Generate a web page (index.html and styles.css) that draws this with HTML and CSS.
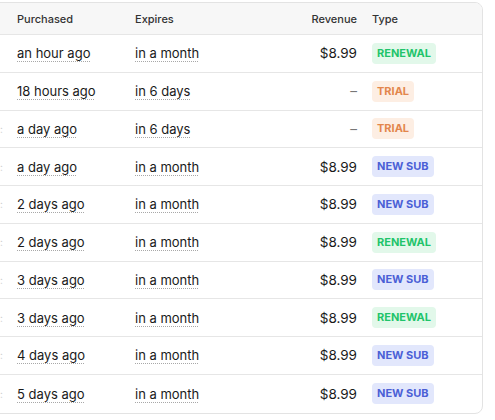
FILE: index.html
```html
<!DOCTYPE html>
<html>
<head>
<meta charset="utf-8">
<link rel="stylesheet" href="styles.css">
</head>
<body>
<div class="viewport">
  <div class="card">
    <div class="row head">
      <div class="cell"></div>
      <div class="cell">Purchased</div>
      <div class="cell">Expires</div>
      <div class="cell num">Revenue</div>
      <div class="cell type">Type</div>
    </div>
    <div class="row">
      <div class="cell"></div>
      <div class="cell"><span class="dt">an hour ago</span></div>
      <div class="cell"><span class="dt">in a month</span></div>
      <div class="cell num">$8.99</div>
      <div class="cell type"><span class="badge renewal">RENEWAL</span></div>
    </div>
    <div class="row">
      <div class="cell"></div>
      <div class="cell"><span class="dt">18 hours ago</span></div>
      <div class="cell"><span class="dt">in 6 days</span></div>
      <div class="cell num dash">–</div>
      <div class="cell type"><span class="badge trial">TRIAL</span></div>
    </div>
    <div class="row">
      <div class="cell cut">:</div>
      <div class="cell"><span class="dt">a day ago</span></div>
      <div class="cell"><span class="dt">in 6 days</span></div>
      <div class="cell num dash">–</div>
      <div class="cell type"><span class="badge trial">TRIAL</span></div>
    </div>
    <div class="row">
      <div class="cell cut">:</div>
      <div class="cell"><span class="dt">a day ago</span></div>
      <div class="cell"><span class="dt">in a month</span></div>
      <div class="cell num">$8.99</div>
      <div class="cell type"><span class="badge newsub">NEW SUB</span></div>
    </div>
    <div class="row">
      <div class="cell cut">:</div>
      <div class="cell"><span class="dt">2 days ago</span></div>
      <div class="cell"><span class="dt">in a month</span></div>
      <div class="cell num">$8.99</div>
      <div class="cell type"><span class="badge newsub">NEW SUB</span></div>
    </div>
    <div class="row">
      <div class="cell cut">:</div>
      <div class="cell"><span class="dt">2 days ago</span></div>
      <div class="cell"><span class="dt">in a month</span></div>
      <div class="cell num">$8.99</div>
      <div class="cell type"><span class="badge renewal">RENEWAL</span></div>
    </div>
    <div class="row">
      <div class="cell cut">:</div>
      <div class="cell"><span class="dt">3 days ago</span></div>
      <div class="cell"><span class="dt">in a month</span></div>
      <div class="cell num">$8.99</div>
      <div class="cell type"><span class="badge newsub">NEW SUB</span></div>
    </div>
    <div class="row">
      <div class="cell cut">:</div>
      <div class="cell"><span class="dt">3 days ago</span></div>
      <div class="cell"><span class="dt">in a month</span></div>
      <div class="cell num">$8.99</div>
      <div class="cell type"><span class="badge renewal">RENEWAL</span></div>
    </div>
    <div class="row">
      <div class="cell cut">:</div>
      <div class="cell"><span class="dt">4 days ago</span></div>
      <div class="cell"><span class="dt">in a month</span></div>
      <div class="cell num">$8.99</div>
      <div class="cell type"><span class="badge newsub">NEW SUB</span></div>
    </div>
    <div class="row">
      <div class="cell cut">:</div>
      <div class="cell"><span class="dt">5 days ago</span></div>
      <div class="cell"><span class="dt">in a month</span></div>
      <div class="cell num">$8.99</div>
      <div class="cell type"><span class="badge newsub">NEW SUB</span></div>
    </div>
  </div>
</div>
</body>
</html>
```
FILE: styles.css
```css
html, body {
  margin: 0;
  padding: 0;
  background: #ffffff;
}
body {
  font-family: Inter, "Noto Sans", sans-serif;
  color: #1a1a1a;
}
.viewport {
  width: 495px;
  height: 420px;
  overflow: hidden;
}
.card {
  margin: 2px 0 0 -30px;
  width: 513px;
  box-sizing: border-box;
  border: 1px solid #e3e3e3;
  border-radius: 8px;
  overflow: hidden;
  background: #fff;
}
.row {
  display: grid;
  grid-template-columns: 34px 118px 112px 122px 1fr;
  align-items: center;
  height: 37.75px;
  box-sizing: border-box;
  border-bottom: 1px solid #e6e6e6;
  font-size: 13px;
}
.row:last-child {
  border-bottom: none;
}
.row.head {
  height: 32px;
  background: #f7f7f7;
  font-size: 11px;
  font-weight: 500;
  color: #333;
}
.cell {
  padding-left: 12px;
  white-space: nowrap;
}
.cell.num {
  padding-left: 0;
  text-align: right;
  font-size: 13.5px;
}
.row.head .cell.num {
  font-size: 11px;
}
.cell.type {
  padding-left: 15px;
}
.cell.cut {
  padding-left: 0;
  color: #d0d0d0;
  text-align: right;
  padding-right: 2px;
  font-size: 10px;
}
.dash {
  color: #777;
}
.dt {
  text-decoration: underline dotted #a8a8a8;
  text-underline-offset: 2.5px;
  text-decoration-thickness: 1px;
}
.badge {
  display: inline-block;
  font-size: 11px;
  font-weight: 700;
  letter-spacing: 0;
  line-height: 21px;
  height: 21px;
  padding: 0 5px;
  border-radius: 4px;
  vertical-align: middle;
}
.renewal {
  background: #e2f8ea;
  color: #1fc46a;
}
.trial {
  background: #fdeee3;
  color: #e3864c;
}
.newsub {
  background: #e2e7fc;
  color: #4b5fd6;
}
```
